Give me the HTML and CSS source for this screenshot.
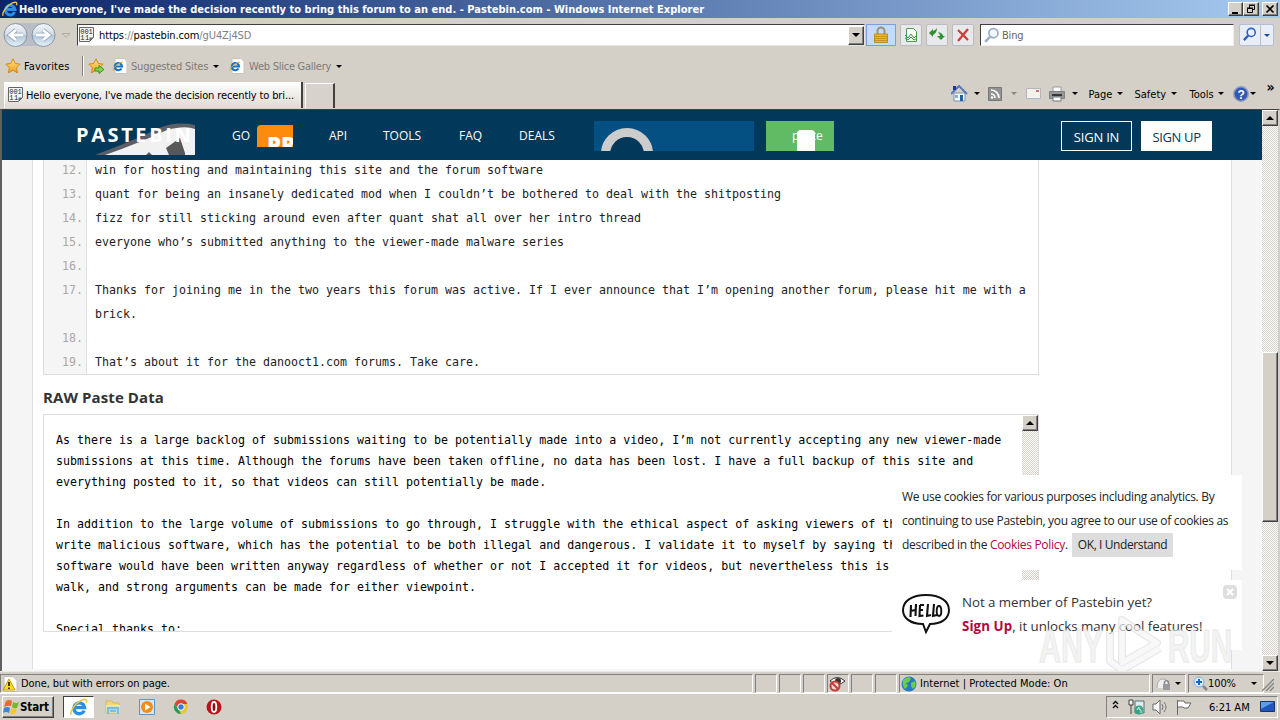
FILE: index.html
```html
<!DOCTYPE html>
<html lang="en">
<head>
<meta charset="utf-8">
<title>Pastebin.com - Windows Internet Explorer</title>
<link rel="stylesheet" href="styles.css">
</head>
<body>
<svg class="defs" width="0" height="0">
  <defs>
    <linearGradient id="orb" x1="0" y1="0" x2="0" y2="1"><stop offset="0" stop-color="#f4f7fa"/><stop offset=".48" stop-color="#d3dbe5"/><stop offset=".5" stop-color="#b3c3d5"/><stop offset="1" stop-color="#e4f4fb"/></linearGradient>
    <linearGradient id="gold" x1="0" y1="0" x2="0" y2="1"><stop offset="0" stop-color="#ffe98a"/><stop offset="1" stop-color="#f39a14"/></linearGradient>
    <symbol id="ie" viewBox="0 0 16 16"><path d="M12.6 11.200A4.800 4.800 0 1 1 13 8.600H5" fill="none" stroke="#2a8fe6" stroke-width="3"/><path d="M1.200 14.800C-.8 12 5 4.500 10 2.200c4-1.900 5.600-.8 4.400 2" fill="none" stroke="#f0c343" stroke-width="1.400"/></symbol>
    <symbol id="iepage" viewBox="0 0 16 16"><path d="M3 .5h9l3 3v12H3z" fill="#fff" stroke="#c9c5bd"/><path d="M9.500 10.500A3.600 3.600 0 1 1 10 8.500H4" fill="none" stroke="#1672c9" stroke-width="2.200"/><path d="M1 13C0 11 5 5 11 4" fill="none" stroke="#e9b22c"/></symbol>
    <symbol id="star" viewBox="0 0 16 16"><path d="M8 .8l2.200 4.700 5 .6-3.700 3.600 1 5.200L8 12.300l-4.600 2.600 1-5.200L.8 6.100l5-.6z" fill="url(#gold)" stroke="#d08a1c"/></symbol>
    <symbol id="bin" viewBox="0 0 16 16"><path d="M.5.500h14v10l-4 4H.5z" fill="#f5f5f5" stroke="#666"/><text x="1.300" y="6.800" font-family="Liberation Mono" font-size="7" textLength="12.500" fill="#222">001</text><text x="1.300" y="13" font-family="Liberation Mono" font-size="7" textLength="9" fill="#222">11</text><path d="M10.500 14.500l4-4h-4z" fill="#667"/></symbol>
    <symbol id="mag" viewBox="0 0 16 16"><circle cx="9.800" cy="5.800" r="4.300" fill="#eaf4ff" fill-opacity=".7" stroke="currentColor" stroke-width="1.700"/><path d="M6.500 9.200L2 14" stroke="currentColor" stroke-width="2.400"/></symbol>
  </defs>
</svg>

<div class="titlebar">
  <svg class="title-icon" width="16" height="16"><use href="#ie"/></svg>
  <span class="title-text">Hello everyone, I've made the decision recently to bring this forum to an end. - Pastebin.com - Windows Internet Explorer</span>
  <div class="winbtns">
    <svg class="raised" width="15" height="14"><path d="M3 9h6v2H3z"/></svg>
    <svg class="raised" width="16" height="14"><path d="M5.500 5V2.500h5v4H9M5 2h6M3.500 5.500h5v4h-5zM3 5h6" fill="none" stroke="#000"/></svg>
    <svg class="raised close" width="16" height="14"><path d="M3.500 2.500l7 7M10.500 2.500l-7 7" stroke="#000" stroke-width="1.700"/></svg>
  </div>
</div>

<div class="navrow">
  <svg class="orbs" width="72" height="28"><path d="M14 2h30a12 12 0 0 1 0 23H14z" fill="#b9bec6"/><circle cx="14.500" cy="14" r="11.500" fill="url(#orb)" stroke="#8795a6"/><circle cx="42.500" cy="14" r="11.500" fill="url(#orb)" stroke="#8795a6"/><path d="M22 14H10m5-5l-6 5 6 5M35 14h12m-5-5l6 5-6 5" fill="none" stroke="#8fa6c4" stroke-width="4.400"/><path d="M22 14H10m5-5l-6 5 6 5M35 14h12m-5-5l6 5-6 5" fill="none" stroke="#fff" stroke-width="2.800"/><path d="M61 12.500h8l-4 4z" fill="#d4d0c8" stroke="#b0aba3"/></svg>
  <div class="address"><svg width="16" height="16"><use href="#bin"/></svg><span class="url">https<i>://</i>pastebin.com<i>/gU4Zj4SD</i></span><div class="drop raised"><b class="tri"></b></div></div>
  <div class="lock"><svg width="16" height="18"><path d="M4.500 9V5a3.500 3.500 0 0 1 7 0v4" fill="none" stroke="#9b9274" stroke-width="2"/><path d="M1.500 8h13v8.500h-13z" fill="#edb91e" stroke="#c08c21"/><path d="M2 10.500h12M2 12.500h12M2 14.500h12" stroke="#c99220"/></svg></div>
  <div class="tbtn"><svg width="16" height="16"><path d="M3.500 1.500h7l3 3v10h-10z" fill="#f5fff5" stroke="#4b9b53"/><path d="M2 8l3 3 3-4 3 4 3-3M2 11l3 2 3-3 3 3 3-2" fill="none" stroke="#3b9145"/></svg></div>
  <div class="tbtn"><svg width="16" height="16"><path d="M0 6l4-4v2q3-1 4-3 0 5-4 7v2z" fill="#2f9133"/><path d="M16 9l-4-4v2q-3 0-4 5 2-2 4-2v3z" transform="rotate(90 12 9)" fill="#2f9133"/></svg></div>
  <div class="tbtn"><svg width="16" height="16"><path d="M3 3l10 10M13 2L3 14" stroke="#cf3c3c" stroke-width="2.200"/></svg></div>
  <div class="search"><svg width="17" height="17"><use href="#mag"/></svg><span>Bing</span></div>
  <div class="go"><svg width="20" height="16" viewBox="-2 0 20 16"><use href="#mag" width="15" height="15"/></svg><em><b class="tri blue"></b></em></div>
</div>

<div class="favrow">
  <svg width="16" height="16"><use href="#star"/></svg><span class="fav-label">Favorites</span><div class="vsep"></div>
  <svg width="17" height="17"><use href="#star" width="16" height="16"/><path d="M7 10h4V7.500l5 4-5 4V13H7z" fill="#89d34b" stroke="#339b24"/></svg>
  <svg class="pg" width="16" height="16"><use href="#iepage"/></svg><span class="sites">Suggested Sites</span><b class="tri"></b>
  <svg class="pg2" width="16" height="16"><use href="#iepage"/></svg><span class="slices">Web Slice Gallery</span><b class="tri"></b>
</div>

<div class="tabrow">
  <div class="tab"><svg width="16" height="16"><use href="#bin"/></svg><span>Hello everyone, I've made the decision recently to bri...</span></div>
  <div class="newtab"></div>
  <div class="cmds">
    <svg class="w26" width="26" height="18"><path d="M3 8h11v8H3z" fill="#f6faff" stroke="#7893b5"/><path d="M0 9L8 1l8 8" fill="none" stroke="#5678b8" stroke-width="2"/><path d="M2 1h3v4H2z" fill="#183b9b"/><path d="M9 10h3v6H9z" fill="#235fa5"/><path d="M4 10h3v3H4z" fill="#86b2df"/></svg>
    <svg class="w37" width="37" height="18"><path d="M.5 2.500h13v13H.5z" fill="#929292" stroke="#777"/><path d="M3 9a4 4 0 0 1 4 4M3 5a8 8 0 0 1 8 8" fill="none" stroke="#fff" stroke-width="1.600"/><circle cx="4" cy="12.500" r="1.200" fill="#fff"/></svg>
    <svg class="w23" width="23" height="18"><path d="M.5 3.500h14v10H.5z" fill="#f5f1ec" stroke="#b5b2bb"/><path d="M10 5h3v2h-3z" fill="#c87272"/><path d="M1 13.500h13" stroke="#a6b9d8"/></svg>
    <svg class="w40" width="26" height="18"><path d="M4 2h8v5H4z" fill="#fff" stroke="#999"/><path d="M.5 6.500h15v7H.5z" fill="#95989b" stroke="#7f8183"/><path d="M3 9h10v2H3z" fill="#363636"/><path d="M4 12h8v4H4z" fill="#fff" stroke="#777"/></svg>
    <span class="c1">Page</span><span class="c2">Safety</span><span class="c3">Tools</span>
    <svg width="34" height="18"><circle cx="8" cy="9" r="7.200" fill="#3158b5" stroke="#8f9cba" stroke-width="1.500"/><text x="4.500" y="13.500" font-family="Liberation Sans" font-weight="bold" font-size="12" fill="#fff">?</text></svg>
    <span class="more">»</span>
    <b class="tri a1"></b><b class="tri a2"></b><b class="tri a3"></b><b class="tri a4"></b><b class="tri a5"></b><b class="tri a6"></b><b class="tri a7"></b>
  </div>
</div>

<div class="viewport">
  <div class="site">
    <div class="head">
      <div class="brand"><svg width="121" height="34"><path d="M19 32Q59 17 83 5q18-7 36-3v30z" fill="#5d5f68"/><path d="M29 32Q66 19 91 7q18-5 28-1v26z" fill="#f1f1f2"/><path d="M90 25l14-10 5 15v2H93zM70 32l3-3 3 3z" fill="#585858"/></svg><span>PASTEBIN</span></div>
      <span class="n-go">GO</span>
      <svg class="pro" width="36" height="22"><path d="M0 22V4q0-4 4-4h32v22z" fill="#ff8b0d"/><text x="10" y="28" font-family="Open Sans" font-weight="800" font-size="22" fill="#fff">PR</text></svg>
      <span class="n-api">API</span><span class="n-tools">TOOLS</span><span class="n-faq">FAQ</span><span class="n-deals">DEALS</span>
      <svg class="sitesearch" width="160" height="30"><circle cx="33" cy="33" r="21.500" fill="#023859" stroke="#ccc" stroke-width="9"/></svg>
      <div class="newpaste"><span>paste</span><i></i></div>
      <div class="btn signin">SIGN IN</div><div class="btn signup">SIGN UP</div>
    </div>
    <div class="container">
      <ol class="code" start="12">
        <li><b>12.</b><span>win for hosting and maintaining this site and the forum software</span></li>
        <li><b>13.</b><span>quant for being an insanely dedicated mod when I couldn’t be bothered to deal with the shitposting</span></li>
        <li><b>14.</b><span>fizz for still sticking around even after quant shat all over her intro thread</span></li>
        <li><b>15.</b><span>everyone who’s submitted anything to the viewer-made malware series</span></li>
        <li><b>16.</b><span></span></li>
        <li><b>17.</b><span>Thanks for joining me in the two years this forum was active. If I ever announce that I’m opening another forum, please hit me with a<br>brick.</span></li>
        <li><b>18.</b><span></span></li>
        <li><b>19.</b><span>That’s about it for the danooct1.com forums. Take care.</span></li>
      </ol>
      <h2>RAW Paste Data</h2>
      <div class="raw">
<pre>As there is a large backlog of submissions waiting to be potentially made into a video, I’m not currently accepting any new viewer-made
submissions at this time. Although the forums have been taken offline, no data has been lost. I have a full backup of this site and
everything posted to it, so that videos can still potentially be made.

In addition to the large volume of submissions to go through, I struggle with the ethical aspect of asking viewers of th
write malicious software, which has the potential to be both illegal and dangerous. I validate it to myself by saying th
software would have been written anyway regardless of whether or not I accepted it for videos, but nevertheless this is
walk, and strong arguments can be made for either viewpoint.

Special thanks to:</pre>
        <div class="track"><div class="raised sb"><b class="tri up"></b></div></div>
      </div>
    </div>
    <div class="cookie"><span class="l1">We use cookies for various purposes including analytics. By</span><span class="l2">continuing to use Pastebin, you agree to our use of cookies as</span><div><span class="l3">described in the <a>Cookies Policy</a>.</span><span class="ok">OK, I Understand</span></div></div>
    <div class="hello">
      <svg width="50" height="42"><path d="M21 30C7 30 1 23 1 16 1 7 10 1 24 1s23 6 23 15-8 14-19 14l-4 8z" fill="#fff" stroke="#111" stroke-width="2"/><path d="M9 11l-.5 12M14 10l-.5 12M8.500 17l5-1M18 11l-.5 11 4-.5M18 11h4M18 16h3M26 10l-1 12 4-1M32 10l-1 12 4-1" fill="none" stroke="#111" stroke-width="2.100"/><ellipse cx="37" cy="17" rx="2.300" ry="5" fill="none" stroke="#111" stroke-width="1.900"/></svg>
      <p><span class="h1">Not a member of Pastebin yet?</span><span class="h2"><a>Sign Up</a>, it unlocks many cool features!</span></p>
      <svg class="x" width="14" height="14"><rect width="14" height="14" rx="4" fill="#dedede"/><path d="M4 4l6 6M10 4l-6 6" stroke="#fff" stroke-width="2"/></svg>
    </div>
    <svg class="mark" width="204" height="66"><g fill="#ececec" fill-opacity=".7" stroke="#ddd" stroke-opacity=".6" stroke-width="1.500" font-family="Liberation Sans" font-weight="bold" font-size="46"><text x="5" y="52" textLength="64" lengthAdjust="spacingAndGlyphs">ANY</text><text x="134" y="52" textLength="64" lengthAdjust="spacingAndGlyphs">RUN</text></g><g fill="none" stroke="#ccc" stroke-opacity=".55" stroke-width="8" stroke-linejoin="round"><path d="M88 10l35 23-35 20z"/><path d="M76 22v29l12 9 38-22"/></g><g fill="none" stroke="#fff" stroke-opacity=".7" stroke-width="5.500" stroke-linejoin="round"><path d="M88 10l35 23-35 20z"/><path d="M76 22v29l12 9 38-22"/></g></svg>
  </div>
  <div class="scroll"><div class="raised sb"><b class="tri up"></b></div><div class="raised thumb"></div><div class="raised sb last"><b class="tri"></b></div></div>
</div>

<div class="status">
  <div class="cell s0"><svg width="16" height="16"><path d="M2 .5h9l4 4v11H2z" fill="#fff" stroke="#bbb"/><path d="M7 3l6 11H1z" fill="#ffdf20" stroke="#c79b00"/><path d="M7 6v4M7 11.500v1.500" stroke="#000" stroke-width="1.500"/></svg><span>Done, but with errors on page.</span></div>
  <div class="cell e"></div><div class="cell e"></div><div class="cell e"></div>
  <div class="cell eye"><svg width="19" height="18"><path d="M2 6q7-7 15 0-8 7-15 0z" fill="#fff" stroke="#333"/><circle cx="10" cy="6" r="3" fill="#333"/><circle cx="7" cy="11" r="4.500" fill="#f6d6d3" stroke="#c63b35" stroke-width="2"/><path d="M4 8l6 6" stroke="#c63b35" stroke-width="2"/></svg></div>
  <div class="cell e"></div><div class="cell e"></div>
  <div class="cell zone"><svg width="16" height="16"><circle cx="8" cy="8" r="7.500" fill="#2879c5"/><path d="M2 4q4-4 8-2l-2 4-3 1 2 3-3 3Q1 10 2 4zM10 7l4-2q2 5-2 8l-2-3z" fill="#6dcc48"/></svg><span>Internet | Protected Mode: On</span></div>
  <div class="cell priv"><svg width="18" height="16"><path d="M2 12Q2 3 8 3t6 9" fill="#eee" stroke="#aaa"/><path d="M8 8h7v6H8z" fill="#9999a0"/><path d="M9.500 8V6q2-3 4 0v2" fill="none" stroke="#888" stroke-width="1.500"/></svg><b class="tri"></b></div>
  <div class="cell zoom"><svg width="15" height="16"><circle cx="6" cy="6" r="5" fill="#d7efff" stroke="#8aa9d0"/><path d="M6 3v6M3 6h6" stroke="#1467cf" stroke-width="2"/><path d="M10 10l4 4" stroke="#81858c" stroke-width="2.500"/></svg><span>100%</span><b class="tri"></b></div>
  <svg class="grip" width="12" height="14"><path d="M0 14L12 2M4 14l8-8M8 14l4-4" stroke="#888" stroke-width="1.500"/></svg>
</div>

<div class="taskbar">
  <div class="start raised"><svg width="17" height="17"><path d="M3 2q3-2 6 0L8 7Q5 6 1 8z" fill="#e96b2c"/><path d="M10 3q3 2 6 0l-2 6q-3 1-5-1z" fill="#76b82a"/><path d="M1 9q3-2 6 0l-1 5q-3-2-6 0z" fill="#3d85d8"/><path d="M8 9q3 2 6 0l-2 6q-3 1-5-1z" fill="#fbc32e"/></svg><span>Start</span></div>
  <div class="task"><svg width="18" height="18"><use href="#ie"/></svg></div>
  <svg class="t1" width="16" height="16"><path d="M1 2h6l1 2h6v10H1z" fill="#f2d77b" stroke="#d5b95e"/><path d="M1 6h14v8H1z" fill="#f8e9a6"/><path d="M3 15V9h10v6M5 12h6" fill="none" stroke="#76bfe2" stroke-width="2.500"/></svg>
  <svg class="t2" width="16" height="16"><path d="M.5.5h15v15H.5z" fill="#d4e8f5" stroke="#5595d0"/><circle cx="8" cy="8" r="6" fill="#f28b1c"/><path d="M6 4.500L11.500 8 6 11.500z" fill="#fff"/></svg>
  <svg class="t3" width="16" height="16"><circle cx="8" cy="8" r="7" fill="#eac82a"/><path d="M1.500 5A7 7 0 0 1 14.500 5H8L5 9z" fill="#dc4437"/><path d="M1.500 5L6 11l2 4A7 7 0 0 1 1.500 5z" fill="#299c57"/><circle cx="8" cy="8" r="3.300" fill="#377bdc" stroke="#fff"/></svg>
  <svg class="t4" width="16" height="16"><circle cx="8" cy="8" r="7.500" fill="#bd1318"/><ellipse cx="8" cy="8" rx="2.300" ry="5" fill="#821014" stroke="#fff" stroke-width="1.800"/></svg>
  <div class="tray"><svg width="94" height="20"><path d="M6 7l2.500-2.500L11 7M6 11l2.500-2.500L11 11" fill="none" stroke="#000" stroke-width="1.300"/><path d="M22 3h4v5h-4zM24 8v9" fill="#eee" stroke="#444"/><path d="M28 4h9v12h-9z" fill="#dcecee" stroke="#54706f"/><circle cx="32" cy="13" r="4.500" fill="#35a389"/><path d="M30 13l2-3v2q3 0 2 4" fill="none" stroke="#dff5df"/><path d="M46 7h3l4-4v14l-4-4h-3z" fill="#f7f7f7" stroke="#666"/><path d="M55 7q2 3 0 6M57 5q4 5 0 10" fill="none" stroke="#777"/><path d="M70.500 3v15M71 4h6l1 2h6l-3 5h-4l-1-1h-5" fill="#fff" stroke="#666"/></svg><span>6:21 AM</span><svg width="15" height="14"><path d="M.5 1.500h14v10H.5z" fill="#1f55bd" stroke="#17366e"/><path d="M1 2h13L1 9z" fill="#5c9dec"/></svg></div>
</div>
</body>
</html>
```
FILE: styles.css
```css
* { box-sizing: border-box; }
body { margin: 0; width: 1280px; height: 720px; overflow: hidden; background: #d4d0c8; display: flex; flex-direction: column; font: 11px "DejaVu Sans Condensed", "DejaVu Sans", sans-serif; font-stretch: condensed; color: #000; white-space: nowrap; }
svg { display: block; flex: none; }
.defs { position: absolute; }
span { flex: none; }
.tri { flex: none; width: 0; height: 0; border: 3px solid transparent; border-top-color: #000; border-bottom: 0; }
.tri.up { border: 4px solid transparent; border-bottom-color: #000; border-top: 0; }
.tri.blue { border-top-color: #174da3; }
.raised { background: #d4d0c8; border: 1px solid; border-color: #fff #404040 #404040 #fff; box-shadow: inset -1px -1px #808080; }

.titlebar { flex: none; height: 18px; display: flex; align-items: center; background: linear-gradient(90deg, #0a246a, #a6caf0); color: #fff; padding: 0 2px; }
.title-text { width: 1207px; margin-left: 1px; font-weight: bold; letter-spacing: .025px; }
.winbtns { display: flex; margin-left: 2px; }
.winbtns .close { margin-left: 3px; }

.navrow { flex: none; height: 32px; display: flex; align-items: center; padding: 2px 0 0 1px; }
.address { width: 788px; height: 22px; margin-left: 4px; background: #fff; border: 1px solid; border-color: #404040 #e8e5e0 #e8e5e0 #404040; display: flex; align-items: center; padding-left: 1px; }
.url { margin-left: 4px; width: 749px; letter-spacing: -.11px; }
.url i { font-style: normal; color: #808080; }
.drop { width: 16px; height: 19px; display: flex; align-items: center; justify-content: center; }
.drop .tri { border-width: 4px 4px 0; }
.lock { width: 30px; height: 22px; margin-left: 1px; background: #c2dcff; border: 1px solid #7a9fdf; display: flex; align-items: center; justify-content: center; }
.tbtn { width: 22px; height: 22px; margin-left: 4px; border: 1px solid #b8bcc4; background: #e9e8ea; display: flex; align-items: center; justify-content: center; border-radius: 2px; }
.search { width: 254px; height: 22px; margin-left: 6px; background: #fff; border: 1px solid; border-color: #404040 #eee #eee #404040; display: flex; align-items: center; padding-left: 2px; color: #9fb0c4; }
.search span { margin: 1px 0 0 2px; color: #666; letter-spacing: -.2px; }
.go { width: 35px; height: 22px; margin-left: 5px; display: flex; align-items: center; color: #2c62c8; background: #e8edf6; border: 1px solid #b4c0d2; border-radius: 2px; }
.go em { height: 20px; flex: 1; border-left: 1px solid #b4c0d2; display: flex; align-items: center; justify-content: center; }

.favrow { flex: none; height: 32px; display: flex; align-items: center; padding-left: 5px; }
.fav-label { width: 58px; margin-left: 3px; letter-spacing: .1px; }
.vsep { width: 2px; height: 20px; margin-right: 4px; border-left: 1px solid #808080; border-right: 1px solid #fff; }
.pg { margin-left: 7px; }
.sites { width: 79px; margin-left: 3px; color: #7d7a75; margin-right: 3px; letter-spacing: -.18px; }
.pg2 { margin-left: 10px; }
.slices { width: 84px; margin: 0 3px 0 4px; color: #7d7a75; letter-spacing: -.25px; }

.tabrow { flex: none; height: 27px; display: flex; padding-left: 4px; }
.tab { width: 299px; height: 26px; display: flex; align-items: center; padding-left: 3px; background: linear-gradient(#fff, #dedad4); border-right: 2px solid #404040; border-left: 1px solid #fff; }
.tab span { margin: 1px 0 0 2px; letter-spacing: -.125px; }
.newtab { width: 30px; height: 25px; margin: 1px 0 0 2px; border: 1px solid #fff; border-right: 2px solid #404040; border-bottom: 0; background: #d7d3cc; }
.cmds { margin-left: 616px; display: flex; align-items: center; position: relative; width: 330px; height: 24px; }
.w26 { margin-right: 11px; }
.w37 { margin-right: 1px; }
.w40 { margin-right: 14px; }
.c1 { width: 46px; }
.c2 { width: 55px; }
.c3 { width: 43px; }
.more { font-size: 14px; margin-top: -14px; font-weight: bold; }
.cmds .tri { position: absolute; top: 10px; }
.cmds .a1 { left: 23px; } .cmds .a2 { left: 60px; opacity: .35; } .cmds .a3 { left: 121px; } .cmds .a4 { left: 166px; } .cmds .a5 { left: 220px; } .cmds .a6 { left: 267px; } .cmds .a7 { left: 299px; }

.viewport { flex: none; height: 562px; display: flex; border-top: 1px solid #404040; border-left: 2px solid #606060; border-right: 1px solid #d4d0c8; }
.site { width: 1260px; height: 561px; position: relative; overflow: hidden; background: #f5f5f5; font-family: "Open Sans", "Noto Sans", sans-serif; font-stretch: normal; }
.head { position: relative; z-index: 1; height: 50px; background: #023859; color: #fff; display: flex; align-items: flex-start; padding-left: 74px; font-size: 12px; }
.head > span { margin-top: 17px; }
.brand { width: 156px; margin-top: 13px; height: 34px; }
.brand span { display: block; margin-top: -36px; font-weight: bold; font-size: 20px; letter-spacing: 2.6px; }
.n-go { width: 25px; } .pro { margin-top: 15px; margin-right: 36px; }
.n-api { width: 54px; } .n-tools { width: 76px; } .n-faq { width: 60px; } .n-deals { width: 75px; }
.sitesearch { margin-top: 11px; background: #045082; }
.newpaste { width: 68px; height: 30px; margin: 11px 227px 0 12px; padding: 6px 0 0 26px; background: #61bb64; overflow: hidden; }
.newpaste i { display: block; width: 18px; height: 22px; margin: -14px 0 0 5px; background: #fff; border-radius: 4px 4px 0 0; }
.btn { width: 71px; height: 30px; margin: 11px 9px 0 0; border: 1px solid #fff; text-align: center; font-size: 13px; line-height: 31px; letter-spacing: -.2px; }
.signup { background: #fff; color: #023859; letter-spacing: -.35px; }
.container { width: 1200px; height: 511px; margin-left: 30px; padding: 0 10px; border: solid #ddd; border-width: 0 1px; background: #fff; }
.code { list-style: none; width: 996px; margin: -2px 0 0; padding: 0; border: 1px solid #ddd; border-top: 0; font: 11.63px/24px "DejaVu Sans Mono", monospace; color: #222; }
.code li { display: flex; }
.code b { width: 43px; padding-right: 3px; text-align: right; color: #a8a8a8; font-weight: normal; background: #f5f5f5; border-right: 1px solid #ddd; }
.code span { margin-left: 8px; }
h2 { margin: 10px 0 0; height: 29px; font-size: 15px; line-height: 24px; letter-spacing: .1px; color: #333; }
.raw { width: 996px; height: 218px; display: flex; justify-content: space-between; border: 1px solid #ddd; overflow: hidden; }
.raw pre { margin: 15px 0 0 12px; width: 966px; font: 11.63px/21px "DejaVu Sans Mono", monospace; letter-spacing: .003px; }
.track, .scroll { width: 16px; background: repeating-conic-gradient(#fff 0 25%, #d4d0c8 0 50%) 0 0 / 2px 2px; }
.sb { width: 16px; height: 16px; display: flex; align-items: center; justify-content: center; }
.scroll { height: 561px; display: flex; flex-direction: column; }
.scroll .tri:not(.up) { border-width: 4px 4px 0; }
.thumb { height: 170px; margin-top: 226px; }
.last { margin-top: auto; }
.cookie { position: absolute; left: 890px; top: 365px; width: 350px; height: 95px; padding: 10px; background: #fff; font-size: 12px; line-height: 24px; letter-spacing: -.3px; color: #222; display: flex; flex-direction: column; }
.cookie div { display: flex; }
a { color: #b10641; }
.l1, .l2 { display: block; width: 330px; }
.l3 { width: 170px; }
.ok { width: 101px; background: #ddd; text-align: center; letter-spacing: -.4px; }
.hello { position: absolute; left: 890px; top: 470px; width: 350px; height: 70px; padding: 14px 10px; background: #fff; display: flex; font-size: 13.3px; line-height: 24px; letter-spacing: -.04px; color: #333; }
.hello p { margin: -4px 0 0 10px; display: flex; flex-direction: column; }
.hello a { font-weight: bold; letter-spacing: .1px; }
.hello .x { position: absolute; left: 331px; top: 5px; }
.mark { position: absolute; left: 1032px; top: 500px; opacity: .8; }

.status { flex: none; height: 23px; display: flex; align-items: center; padding-top: 2px; border-top: 1px solid #eceae5; border-bottom: 1px solid #fff; gap: 2px; }
.cell { height: 19px; border: 1px solid; border-color: #808080 #fff #fff #808080; display: flex; align-items: center; letter-spacing: -.09px; }
.s0 { width: 753px; padding-left: 1px; } .s0 span { margin-left: 3px; }
.e, .eye { width: 22px; }
.zone { width: 251px; padding-left: 1px; } .zone span { margin-left: 3px; letter-spacing: .03px; }
.priv { width: 34px; padding-left: 2px; } .priv .tri { margin-left: 2px; }
.zoom { width: 76px; padding-left: 4px; } .zoom span { width: 43px; }
.grip { margin-left: -4px; }

.taskbar { flex: none; height: 26px; display: flex; align-items: center; padding-left: 2px; }
.start { width: 52px; height: 22px; display: flex; align-items: center; font-weight: bold; font-size: 11.5px; letter-spacing: -.1px; }
.task { width: 31px; height: 22px; margin: 0 11px 0 9px; background: #fff; border: 1px solid; border-color: #404040 #fff #fff #404040; display: flex; align-items: center; justify-content: center; }
.t1 { margin-right: 18px; } .t2 { margin-right: 18px; } .t3 { margin-right: 17px; }
.tray { width: 172px; height: 22px; margin-left: auto; margin-right: 2px; border: 1px solid; border-color: #808080 #fff #fff #808080; display: flex; align-items: center; }
.tray span { width: 51px; margin-left: 8px; }
```
